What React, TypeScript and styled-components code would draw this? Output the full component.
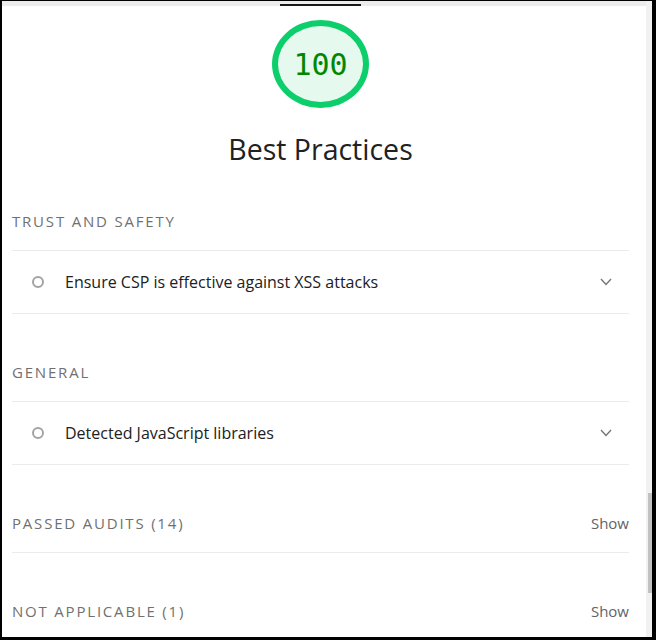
import styled, { createGlobalStyle } from "styled-components";

const GlobalStyle = createGlobalStyle`
  html, body {
    margin: 0;
    padding: 0;
    background: #ffffff;
  }
  * {
    box-sizing: border-box;
  }
`;

const Frame = styled.div`
  width: 656px;
  height: 640px;
  border-style: solid;
  border-color: #000000;
  border-width: 1px 4px 3px 2px;
  display: flex;
  overflow: hidden;
  font-family: "Open Sans", "Noto Sans", sans-serif;
`;

const Main = styled.div`
  flex: 1;
  display: flex;
  flex-direction: column;
  overflow: hidden;
`;

const TopBand = styled.div`
  flex-shrink: 0;
  height: 5px;
  background: #ececec;
  display: flex;
  justify-content: center;
  align-items: flex-end;
  padding: 0 17px 0 10px;
`;

const ActiveTab = styled.div`
  width: 81px;
  height: 2px;
  background: #1a1a1a;
`;

const Body = styled.div`
  flex-shrink: 0;
  padding: 0 17px 0 10px;
`;

const Hero = styled.div`
  display: flex;
  flex-direction: column;
  align-items: center;
  padding-top: 14px;
  height: 157px;
`;

const Gauge = styled.div`
  width: 97px;
  height: 97px;
  border-radius: 50%;
  border: 6px solid #0cce6b;
  background: #e6f9ef;
  display: flex;
  align-items: center;
  justify-content: center;
  font-family: "DejaVu Sans Mono", "Liberation Mono", monospace;
  font-size: 30px;
  color: #008800;
`;

const Title = styled.h1`
  margin: 27px 0 0;
  font-size: 28.5px;
  line-height: 28px;
  font-weight: 400;
  color: #212121;
`;

const Group = styled.section`
  margin-top: 29px;
`;

const GroupHeader = styled.div`
  height: 59px;
  display: flex;
  align-items: center;
  justify-content: space-between;
  border-bottom: 1px solid #ebebeb;
`;

const GroupTitle = styled.span`
  font-size: 15px;
  letter-spacing: 1.8px;
  text-transform: uppercase;
  color: #707070;
`;

const ShowLink = styled.span`
  font-size: 15px;
  color: #5f6368;
`;

const Audit = styled.div`
  height: 63px;
  display: flex;
  align-items: center;
  padding: 0 17px 0 20px;
  border-bottom: 1px solid #ebebeb;
`;

const AuditIcon = styled.span`
  width: 12px;
  height: 12px;
  border-radius: 50%;
  border: 2px solid #a3a3a3;
  flex-shrink: 0;
`;

const AuditText = styled.span`
  flex: 1;
  margin-left: 21px;
  font-size: 16px;
  color: #212121;
`;

const Chevron = styled.svg`
  width: 12px;
  height: 8px;
  flex-shrink: 0;
`;

const Scrollbar = styled.div`
  width: 6px;
  background: #f1f1f1;
  display: flex;
  flex-direction: column;
  align-items: flex-end;
`;

const Thumb = styled.div`
  margin-top: 492px;
  width: 4px;
  height: 100px;
  background: #c1c1c1;
`;

type AuditRowProps = { label: string };

const AuditRow = ({ label }: AuditRowProps) => (
  <Audit>
    <AuditIcon />
    <AuditText>{label}</AuditText>
    <Chevron viewBox="0 0 12 8">
      <polyline points="1,1 6,6.5 11,1" fill="none" stroke="#757575" strokeWidth="1.4" />
    </Chevron>
  </Audit>
);

export default function App() {
  return (
    <>
      <GlobalStyle />
      <Frame>
        <Main>
          <TopBand>
            <ActiveTab />
          </TopBand>
          <Body>
            <Hero>
              <Gauge>100</Gauge>
              <Title>Best Practices</Title>
            </Hero>
            <Group>
              <GroupHeader>
                <GroupTitle>Trust and Safety</GroupTitle>
              </GroupHeader>
              <AuditRow label="Ensure CSP is effective against XSS attacks" />
            </Group>
            <Group>
              <GroupHeader>
                <GroupTitle>General</GroupTitle>
              </GroupHeader>
              <AuditRow label="Detected JavaScript libraries" />
            </Group>
            <Group>
              <GroupHeader>
                <GroupTitle>Passed audits (14)</GroupTitle>
                <ShowLink>Show</ShowLink>
              </GroupHeader>
            </Group>
            <Group>
              <GroupHeader>
                <GroupTitle>Not applicable (1)</GroupTitle>
                <ShowLink>Show</ShowLink>
              </GroupHeader>
            </Group>
          </Body>
        </Main>
        <Scrollbar>
          <Thumb />
        </Scrollbar>
      </Frame>
    </>
  );
}
